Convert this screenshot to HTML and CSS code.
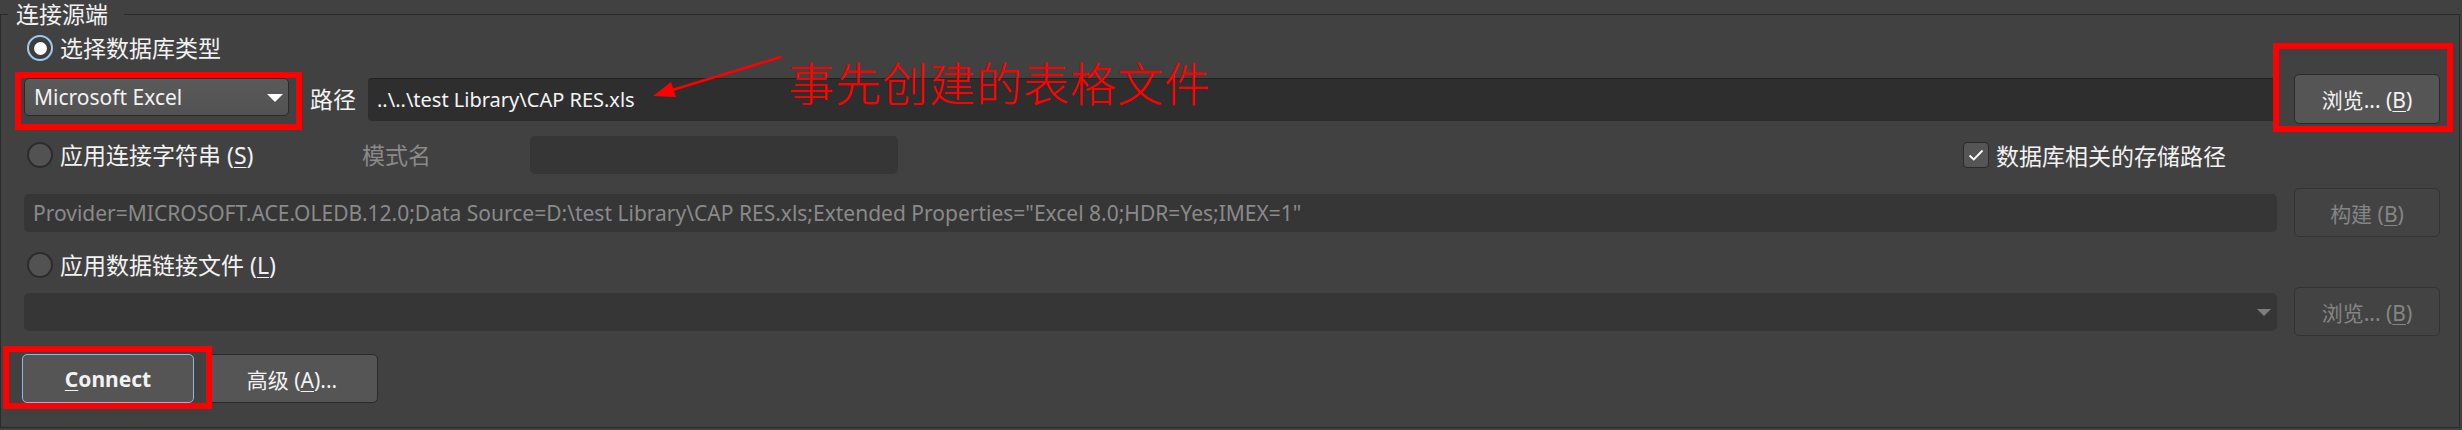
FILE: index.html
```html
<!DOCTYPE html>
<html lang="zh-CN">
<head>
    <meta charset="UTF-8">
    <title>连接源端</title>
    <link rel="stylesheet" href="styles.css">
</head>
<body>
    <fieldset class="group">
        <legend>连接源端</legend>

        <div class="row row-type">
            <label class="radio"><span class="dot on"></span><span>选择数据库类型</span></label>
        </div>

        <div class="row row-path">
            <div class="combo">Microsoft Excel<span class="caret"></span></div>
            <span class="lbl">路径</span>
            <div class="field path">..\..\test Library\CAP RES.xls</div>
            <button class="btn tall">浏览... (<u>B</u>)</button>
        </div>

        <div class="row row-conn">
            <label class="radio"><span class="dot"></span><span>应用连接字符串 (<u>S</u>)</span></label>
            <span class="lbl muted">模式名</span>
            <div class="field off schema"></div>
            <label class="check">
                <span class="box">
                    <svg width="16" height="12" viewBox="0 0 16 12"><path d="M1.5 6.5 L5.8 10.5 L14.5 1.5" fill="none" stroke="#fff" stroke-width="1.8"/></svg>
                </span><span>数据库相关的存储路径</span>
            </label>
        </div>

        <div class="row row-provider">
            <div class="field off wide">Provider=MICROSOFT.ACE.OLEDB.12.0;Data Source=D:\test Library\CAP RES.xls;Extended Properties="Excel 8.0;HDR=Yes;IMEX=1"</div>
            <button class="btn off">构建 (<u>B</u>)</button>
        </div>

        <div class="row row-file-label">
            <label class="radio"><span class="dot"></span><span>应用数据链接文件 (<u>L</u>)</span></label>
        </div>

        <div class="row row-file">
            <div class="field off wide picker"><span class="caret dim"></span></div>
            <button class="btn off">浏览... (<u>B</u>)</button>
        </div>

        <div class="row row-actions">
            <button class="btn primary"><u>C</u>onnect</button>
            <button class="btn">高级 (<u>A</u>)...</button>
        </div>
    </fieldset>

    <!-- red annotations drawn over the dialog -->
    <div class="mark mark-type"></div>
    <div class="mark mark-browse"></div>
    <div class="mark mark-connect"></div>
    <svg class="pointer" width="140" height="50" viewBox="0 0 140 50">
        <line x1="136" y1="2" x2="24" y2="36" stroke="#ff0000" stroke-width="2.5"/>
        <polygon points="8,41 26,27 31,42" fill="#ff0000"/>
    </svg>
    <div class="note">事先创建的表格文件</div>
</body>
</html>
```

FILE: styles.css
```css
* { box-sizing: border-box; }
html, body { margin: 0; }
body {
    position: relative;
    width: 2462px;
    height: 430px;
    overflow: hidden;
    background: #414141;
    color: #f2f2f2;
    font-family: "Noto Sans", "Noto Sans CJK SC", sans-serif;
    font-size: 23px;
}

.group {
    margin: 0 2px 0 0;
    padding: 6px 19px 24px 23px;
    border: 1px solid #2a2a2a;
    min-width: 0;
}
.group legend {
    margin-left: -16px;
    padding: 0 16px 0 8px;
    line-height: 28px;
    height: 28px;
}

.row { display: flex; align-items: center; }
.row-type { height: 28px; padding-left: 3px; }
.row-path { height: 50px; margin-top: 12px; }
.row-conn { height: 38px; margin-top: 12px; padding-left: 3px; }
.row-provider { height: 49px; margin-top: 14px; }
.row-file-label { height: 28px; margin-top: 14px; padding-left: 3px; }
.row-file { height: 49px; margin-top: 8px; }
.row-actions { height: 49px; margin-top: 18px; gap: 12px; margin-left: -2px; }

.radio { display: flex; align-items: center; gap: 7px; line-height: 28px; white-space: nowrap; }
.row-conn .radio { flex: 0 0 335px; }
.dot {
    flex: 0 0 26px;
    width: 26px; height: 26px;
    border-radius: 50%;
    background: #525252;
    border: 2px solid #2c2c2c;
    display: inline-flex; align-items: center; justify-content: center;
}
.dot.on { border-color: #9ccaf0; background: #3d3d3d; }
.dot.on::after { content: ""; width: 13px; height: 13px; border-radius: 50%; background: #fff; }

u { text-decoration-thickness: 1px; text-underline-offset: 3px; }

.combo {
    position: relative;
    flex: 0 0 265px;
    height: 38px;
    margin-top: -4px;
    padding-left: 9px;
    line-height: 36px;
    border: 1px solid #2a2a2a;
    border-radius: 5px;
    background: linear-gradient(#5a5a5a, #525252);
    font-size: 21px;
}
.caret {
    position: absolute;
    right: 5px; top: 15px;
    border-left: 8px solid transparent;
    border-right: 8px solid transparent;
    border-top: 8px solid #fff;
}
.caret.dim { border-top-color: #7e7e7e; right: 6px; top: 16px; border-width: 7px 7px 0; }

.lbl { margin-left: 21px; flex: 0 0 58px; line-height: 28px; }
.lbl.muted { color: #8a8a8a; margin-left: 0; flex: 0 0 168px; }

.field {
    height: 38px;
    border-radius: 5px;
    background: #363636;
    line-height: 38px;
    padding-left: 9px;
    white-space: nowrap;
    overflow: hidden;
    font-size: 21px;
}
.field.path {
    flex: 1;
    height: 43px;
    line-height: 42px;
    background: #2e2e2e;
    border-top: 1px solid #222;
    border-radius: 4px 0 0 4px;
    color: #f4f4f4;
    font-size: 20px;
}
.field.off { color: #8a8a8a; }
.field.schema { flex: 0 0 368px; }
.field.wide { flex: 1; }
.picker { position: relative; }

.check { margin-left: auto; flex: 0 0 477px; display: flex; align-items: center; gap: 7px; white-space: nowrap; }
.box {
    width: 26px; height: 26px;
    border: 1px solid #2a2a2a;
    border-radius: 4px;
    background: #555;
    display: inline-flex; align-items: center; justify-content: center;
}

.btn {
    flex: 0 0 146px;
    height: 49px;
    margin-left: 17px;
    border: 1px solid #2a2a2a;
    border-radius: 5px;
    background: #555;
    color: #f2f2f2;
    font-family: "Noto Sans", "Noto Sans CJK SC", sans-serif;
    font-size: 21px;
    padding: 0;
}
.btn.tall { height: 50px; }
.btn.off { background: #434343; border-color: #333; color: #858585; }
.row-actions .btn { margin-left: 0; flex: 0 0 172px; }
.btn.primary { border-color: #8fb8e0; font-weight: bold; }

.mark { position: absolute; border: 6px solid #ff0000; }
.mark-type { left: 15px; top: 72px; width: 287px; height: 58px; }
.mark-browse { left: 2273px; top: 43px; width: 180px; height: 89px; }
.mark-connect { left: 3px; top: 346px; width: 209px; height: 63px; }

.pointer { position: absolute; left: 645px; top: 55px; }
.note {
    position: absolute;
    left: 788px; top: 56px;
    color: #ff0000;
    font-family: "Noto Sans CJK SC", sans-serif;
    font-size: 46px;
    line-height: 50px;
    font-weight: 300;
    letter-spacing: 1px;
}
```
